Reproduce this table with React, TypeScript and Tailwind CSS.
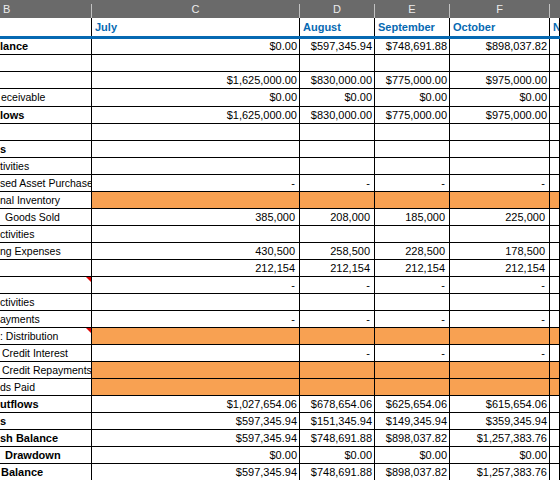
import React from "react";

type Row = {
  label: string;
  bold?: boolean;
  pad?: string;
  vals?: string[];
  acct?: boolean;
  fill?: boolean;
  note?: boolean;
  h?: string;
};

const widths = ["w-[92px]", "w-[208px]", "w-[75px]", "w-[75px]", "w-[100px]", "flex-1"];

const dash = ["-", "-", "-", "-"];

const rows: Row[] = [
  { label: "lance", bold: true, h: "h-[16px]", vals: ["$0.00", "$597,345.94", "$748,691.88", "$898,037.82"] },
  { label: "" },
  { label: "", h: "h-[17px]", vals: ["$1,625,000.00", "$830,000.00", "$775,000.00", "$975,000.00"] },
  { label: "eceivable", h: "h-[18px]", pad: "pl-[1px]", vals: ["$0.00", "$0.00", "$0.00", "$0.00"] },
  { label: "lows", bold: true, vals: ["$1,625,000.00", "$830,000.00", "$775,000.00", "$975,000.00"] },
  { label: "" },
  { label: "s", bold: true },
  { label: "tivities" },
  { label: "sed Asset Purchases", acct: true, vals: dash },
  { label: "nal Inventory", fill: true },
  { label: "Goods Sold", pad: "pl-[5px]", acct: true, vals: ["385,000", "208,000", "185,000", "225,000"] },
  { label: "ctivities" },
  { label: "ng Expenses", acct: true, vals: ["430,500", "258,500", "228,500", "178,500"] },
  { label: "", acct: true, vals: ["212,154", "212,154", "212,154", "212,154"] },
  { label: "", acct: true, note: true, vals: dash },
  { label: "ctivities" },
  { label: "ayments", acct: true, vals: dash },
  { label: ": Distribution", fill: true, note: true },
  { label: "Credit Interest", pad: "pl-[2px]", acct: true, vals: ["", "-", "-", "-"] },
  { label: "Credit Repayments", pad: "pl-[2px]", fill: true },
  { label: "ds Paid", fill: true },
  { label: "utflows", bold: true, vals: ["$1,027,654.06", "$678,654.06", "$625,654.06", "$615,654.06"] },
  { label: "s", bold: true, vals: ["$597,345.94", "$151,345.94", "$149,345.94", "$359,345.94"] },
  { label: "sh Balance", bold: true, vals: ["$597,345.94", "$748,691.88", "$898,037.82", "$1,257,383.76"] },
  { label: "Drawdown", bold: true, pad: "pl-[5px]", vals: ["$0.00", "$0.00", "$0.00", "$0.00"] },
  { label: "Balance", bold: true, pad: "pl-[1px]", vals: ["$597,345.94", "$748,691.88", "$898,037.82", "$1,257,383.76"] },
];

const Note = () => (
  <svg className="absolute right-0 top-0" width="5" height="5" viewBox="0 0 5 5">
    <polygon points="0,0 5,0 5,5" fill="#e00000" />
  </svg>
);

const SheetRow = ({ row }: { row: Row }) => {
  const h = row.h ?? "h-[17px]";
  return (
    <div className={`flex ${h}`}>
      <div
        className={`relative ${widths[0]} shrink-0 flex items-center overflow-hidden whitespace-nowrap border-r border-b border-black ${row.pad ?? "pl-0"} ${row.bold ? "font-bold text-[11px]" : "text-[10.5px]"}`}
      >
        {row.label}
        {row.note && <Note />}
      </div>
      {[1, 2, 3, 4, 5].map((i) => (
        <div
          key={i}
          className={`${widths[i]} shrink-0 flex items-center justify-end overflow-hidden whitespace-nowrap border-r border-b border-black text-[11px] ${row.fill ? "bg-[#f8a152]" : "bg-white"} ${row.acct ? "pr-[4px]" : "pr-[2px]"}`}
        >
          {i < 5 && row.vals ? row.vals[i - 1] : ""}
        </div>
      ))}
    </div>
  );
};

export default function App() {
  const letters = ["B", "C", "D", "E", "F", ""];
  const months = ["", "July", "August", "September", "October", "N"];

  return (
    <div className="w-[560px] h-[480px] overflow-hidden bg-white text-black font-['Liberation_Sans',Arial,sans-serif] leading-none">
      <div className="flex h-[18px] bg-[#6a6a6a] text-[11px] text-[#ececec]">
        {letters.map((l, i) => (
          <div key={i} className={`${widths[i]} shrink-0 flex`}>
            <div className={`flex-1 flex items-center ${i === 0 ? "pl-[3px]" : "justify-center"}`}>{l}</div>
            {i < 5 && <span className="w-px h-[14px] self-end bg-[#c2c2c2]" />}
          </div>
        ))}
      </div>
      <div className="flex h-[18px]">
        {months.map((m, i) => (
          <div
            key={i}
            className={`${widths[i]} shrink-0 flex items-center pl-[3px] overflow-hidden whitespace-nowrap border-r border-black text-[11px] font-bold text-[#0669b2]`}
          >
            {m}
          </div>
        ))}
      </div>
      <div className="h-[3px] bg-[#0669b2]" />
      {rows.map((r, i) => (
        <SheetRow key={i} row={r} />
      ))}
    </div>
  );
}
